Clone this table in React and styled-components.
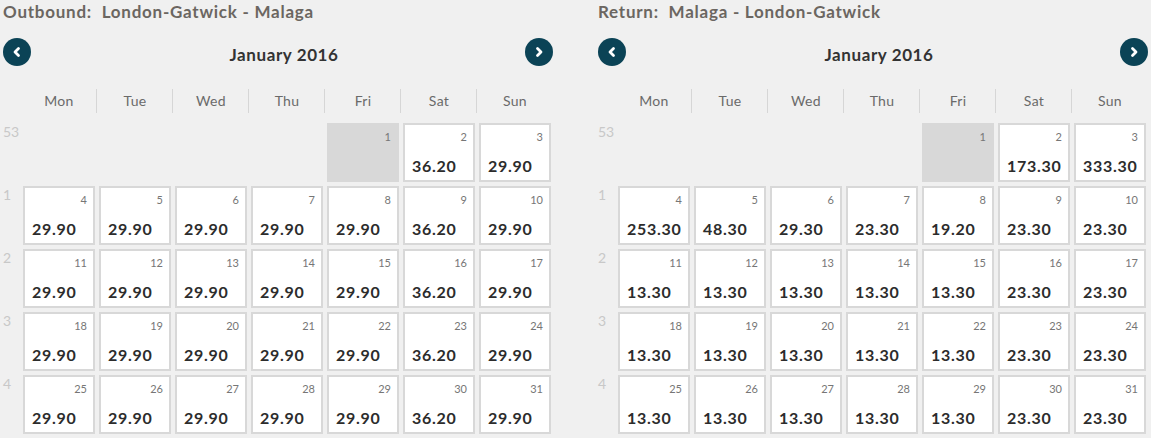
import React from "react";
import styled, { createGlobalStyle } from "styled-components";

const GlobalStyle = createGlobalStyle`
  body {
    margin: 0;
    background: #f0f0f0;
    font-family: Lato, "Open Sans", sans-serif;
  }
`;

const Page = styled.div`
  display: flex;
  gap: 42px;
  width: 1151px;
  height: 438px;
  overflow: hidden;
`;

const Panel = styled.section`
  width: 553px;
  flex: none;
`;

const Title = styled.h2`
  margin: 0;
  padding: 1px 0 0 3px;
  height: 23px;
  font-size: 17px;
  font-weight: 700;
  line-height: 22px;
  letter-spacing: 0.75px;
  color: #6b6661;
  white-space: pre;
`;

const NavRow = styled.div`
  display: flex;
  align-items: center;
  justify-content: space-between;
  height: 28px;
  margin-top: 14px;
  padding-left: 3px;
`;

const NavButton = styled.button`
  width: 28px;
  height: 28px;
  border-radius: 50%;
  border: none;
  padding: 0;
  background: #0b4356;
  display: flex;
  align-items: center;
  justify-content: center;
  cursor: pointer;
`;

const Month = styled.div`
  flex: 1;
  text-align: center;
  font-size: 17px;
  font-weight: 700;
  letter-spacing: 0.6px;
  color: #333;
  padding-top: 4px;
  padding-left: 12px;
`;

const Grid = styled.div`
  display: grid;
  grid-template-columns: 21px repeat(7, 76px);
`;

const Head = styled(Grid)`
  margin-top: 23px;
  height: 24px;
  margin-bottom: 8px;
`;

const DayName = styled.div`
  text-align: center;
  font-size: 14px;
  line-height: 24px;
  letter-spacing: 0.3px;
  color: #6a6a6a;
  border-left: ${(p) => (p.$first ? "none" : "1px solid #d6d6d6")};
  margin-left: ${(p) => (p.$first ? "0" : "-1px")};
`;

const Week = styled(Grid)`
  height: 63px;
`;

const WeekNum = styled.div`
  font-size: 14px;
  color: #c8c8c8;
  padding: 2px 0 0 3px;
`;

const Cell = styled.div`
  position: relative;
  margin: 2px;
  height: 59px;
  box-sizing: border-box;
  border: 2px solid #d8d8d8;
  background: ${(p) => (p.$disabled ? "#d8d8d8" : "#fff")};
`;

const DayNum = styled.span`
  position: absolute;
  top: 5px;
  right: 6px;
  font-size: 11px;
  color: #767676;
`;

const Price = styled.span`
  position: absolute;
  left: 7px;
  bottom: 5px;
  font-size: 16px;
  font-weight: 700;
  letter-spacing: 0.7px;
  color: #2c2c2c;
`;

const days = ["Mon", "Tue", "Wed", "Thu", "Fri", "Sat", "Sun"];

const Chevron = ({ dir }) => (
  <svg width="12" height="12" viewBox="0 0 12 12">
    <polyline
      points={dir === "left" ? "7.5,2.5 4,6 7.5,9.5" : "4.5,2.5 8,6 4.5,9.5"}
      fill="none"
      stroke="#fff"
      strokeWidth="2.8"
      strokeLinecap="round"
      strokeLinejoin="round"
    />
  </svg>
);

const weekRows = (prices) => [
  { num: 53, start: 4, first: 1, prices: prices[0] },
  { num: 1, start: 0, first: 4, prices: prices[1] },
  { num: 2, start: 0, first: 11, prices: prices[2] },
  { num: 3, start: 0, first: 18, prices: prices[3] },
  { num: 4, start: 0, first: 25, prices: prices[4] },
];

const outbound = [
  [null, "36.20", "29.90"],
  ["29.90", "29.90", "29.90", "29.90", "29.90", "36.20", "29.90"],
  ["29.90", "29.90", "29.90", "29.90", "29.90", "36.20", "29.90"],
  ["29.90", "29.90", "29.90", "29.90", "29.90", "36.20", "29.90"],
  ["29.90", "29.90", "29.90", "29.90", "29.90", "36.20", "29.90"],
];

const inbound = [
  [null, "173.30", "333.30"],
  ["253.30", "48.30", "29.30", "23.30", "19.20", "23.30", "23.30"],
  ["13.30", "13.30", "13.30", "13.30", "13.30", "23.30", "23.30"],
  ["13.30", "13.30", "13.30", "13.30", "13.30", "23.30", "23.30"],
  ["13.30", "13.30", "13.30", "13.30", "13.30", "23.30", "23.30"],
];

function Calendar({ title, prices }) {
  return (
    <Panel>
      <Title>{title}</Title>
      <NavRow>
        <NavButton aria-label="Previous month">
          <Chevron dir="left" />
        </NavButton>
        <Month>January 2016</Month>
        <NavButton aria-label="Next month">
          <Chevron dir="right" />
        </NavButton>
      </NavRow>
      <Head>
        <div />
        {days.map((d, i) => (
          <DayName key={d} $first={i === 0}>
            {d}
          </DayName>
        ))}
      </Head>
      {weekRows(prices).map((w) => (
        <Week key={w.num}>
          <WeekNum>{w.num}</WeekNum>
          {Array.from({ length: 7 }).map((_, i) => {
            if (i < w.start) return <div key={i} />;
            const idx = i - w.start;
            const price = w.prices[idx];
            return (
              <Cell key={i} $disabled={!price}>
                <DayNum>{w.first + idx}</DayNum>
                {price && <Price>{price}</Price>}
              </Cell>
            );
          })}
        </Week>
      ))}
    </Panel>
  );
}

export default function App() {
  return (
    <>
      <GlobalStyle />
      <Page>
        <Calendar title="Outbound:  London-Gatwick - Malaga" prices={outbound} />
        <Calendar title="Return:  Malaga - London-Gatwick" prices={inbound} />
      </Page>
    </>
  );
}
